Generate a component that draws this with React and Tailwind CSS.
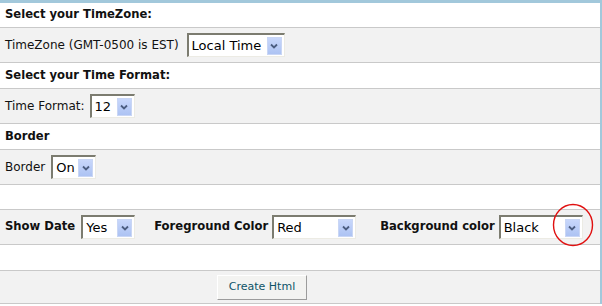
import React from 'react';

function Select({ value, className }) {
  return (
    <div
      className={`flex h-[24px] items-center border-t-2 border-l-2 border-r border-b border-t-[#7c7c70] border-l-[#7c7c70] border-r-[#ecebe4] border-b-[#ecebe4] bg-white pl-[3px] pr-[2px] ${className}`}
    >
      <span className="flex-1 text-[13px] text-black">{value}</span>
      <span className="flex h-[18px] w-[15px] items-center justify-center border border-[#c9d6f5] bg-gradient-to-b from-[#c8d7fb] to-[#adc3f3]">
        <svg width="8" height="6" viewBox="0 0 8 6">
          <path d="M1 1.5 L4 4.5 L7 1.5" fill="none" stroke="#4b5d80" strokeWidth="1.8" />
        </svg>
      </span>
    </div>
  );
}

function Row({ grey, h, children }) {
  return (
    <div
      className={`flex items-center border-b border-[#c9c9c9] pl-[5px] ${grey ? 'bg-[#f2f2f2]' : 'bg-white'} ${h}`}
    >
      {children}
    </div>
  );
}

export default function App() {
  return (
    <div className="h-[306px] w-[602px] bg-white font-['DejaVu_Sans',Verdana,sans-serif] text-[12px] text-[#111]">
      <div className="border-t-[3px] border-r-2 border-[#a2c8db]">
        <Row h="h-[25px]">
          <b className="text-[11.6px]">Select your TimeZone:</b>
        </Row>
        <Row grey h="h-[35px]">
          <span>TimeZone (GMT-0500 is EST)</span>
          <Select value="Local Time" className="ml-[8px] w-[98px]" />
        </Row>
        <Row h="h-[26px]">
          <b className="text-[11.6px]">Select your Time Format:</b>
        </Row>
        <Row grey h="h-[35px]">
          <span>Time Format:</span>
          <Select value="12" className="ml-[5px] w-[45px]" />
        </Row>
        <Row h="h-[26px]">
          <b className="text-[11.6px]">Border</b>
        </Row>
        <Row grey h="h-[35px]">
          <span>Border</span>
          <Select value="On" className="ml-[6px] w-[45px]" />
        </Row>
        <Row h="h-[25px]" />
        <Row grey h="h-[35px]">
          <b className="text-[11.6px]">Show Date</b>
          <Select value="Yes" className="ml-[6px] w-[54px]" />
          <b className="ml-[19px] text-[11.6px]">Foreground Color</b>
          <Select value="Red" className="ml-[4px] w-[84px]" />
          <b className="ml-[24px] text-[11.6px]">Background color</b>
          <div className="relative ml-[4px]">
            <Select value="Black" className="w-[84px]" />
            <svg className="absolute left-[53px] top-[-12px]" width="42" height="44" viewBox="0 0 42 44">
              <ellipse cx="21" cy="22" rx="19.5" ry="20.5" fill="none" stroke="#e01010" strokeWidth="1.4" />
            </svg>
          </div>
        </Row>
        <Row h="h-[26px]" />
        <Row grey h="h-[33px]">
          <button className="ml-[212px] h-[25px] w-[90px] border border-t-white border-l-white border-r-[#9c9c9c] border-b-[#9c9c9c] bg-[#f3f3f1] text-[11px] text-[#0e5468]">
            Create Html
          </button>
        </Row>
      </div>
    </div>
  );
}
